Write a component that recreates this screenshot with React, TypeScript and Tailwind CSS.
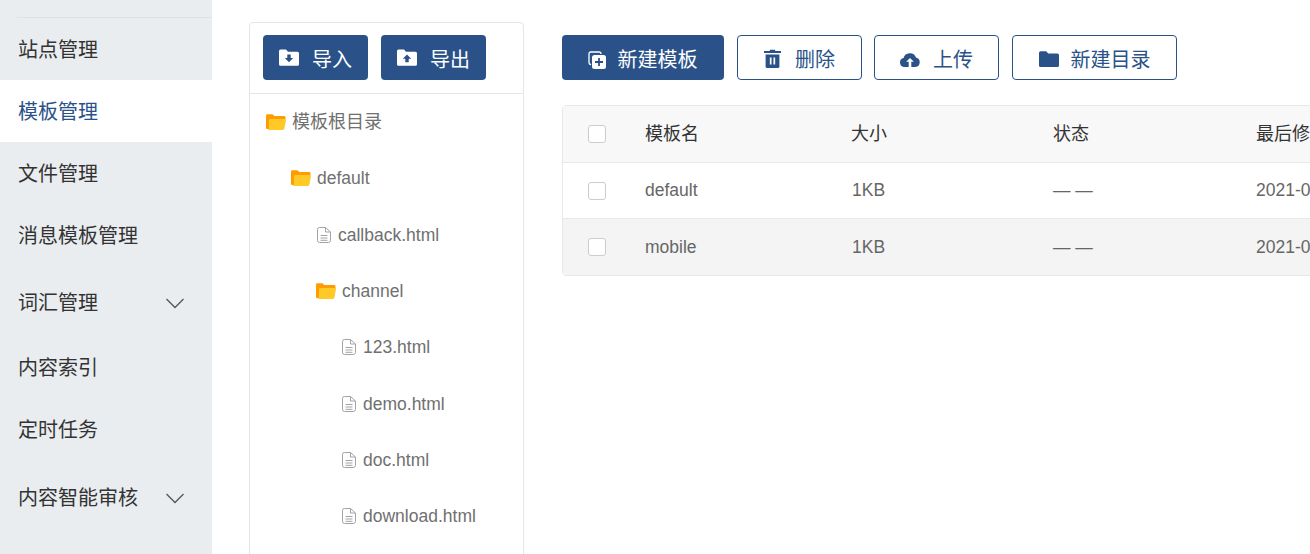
import React from "react";

const FONT = "font-['Liberation_Sans','Noto_Sans_CJK_SC',sans-serif]";

function FolderArrow({ up }: { up?: boolean }) {
  return (
    <svg width="20" height="17" viewBox="0 0 20 17" className="shrink-0">
      <path d="M0 2a1.5 1.5 0 0 1 1.5-1.5h5.5l2 2.2h9.5A1.5 1.5 0 0 1 20 4.2v11a1.5 1.5 0 0 1-1.5 1.5h-17A1.5 1.5 0 0 1 0 15.2z" fill="#fff" />
      {up ? (
        <path d="M10 5.500l4.200 4.300h-2.500v3.500h-3.400v-3.500h-2.500z" fill="#2a5288" />
      ) : (
        <path d="M8.300 5.500h3.400v3.500h2.500l-4.200 4.300-4.200-4.300h2.500z" fill="#2a5288" />
      )}
    </svg>
  );
}

function CopyPlus() {
  return (
    <svg width="18" height="18" viewBox="0 0 18 18" className="shrink-0 mt-[5px] -ml-px mr-px">
      <path d="M3 13.500h-.3A1.700 1.700 0 0 1 1 11.800V2.700A1.700 1.700 0 0 1 2.700 1h8.600A1.700 1.700 0 0 1 13 2.700V3" fill="none" stroke="#fff" strokeWidth="1.300" />
      <rect x="4" y="4" width="14" height="14" rx="2.500" fill="#fff" />
      <path d="M11 7v8M7 11h8" stroke="#2a5288" strokeWidth="1.800" />
    </svg>
  );
}

function Trash() {
  return (
    <svg width="17" height="19" viewBox="0 0 16 19" preserveAspectRatio="none" className="shrink-0 mt-[2px]">
      <path d="M5.500 2V.8h5V2H16v2H0V2z" fill="#2a5288" />
      <path d="M1.500 5.500h13V17.500A1.500 1.500 0 0 1 13 19H3a1.500 1.500 0 0 1-1.500-1.500z" fill="#2a5288" />
      <path d="M5.500 8.500h1.600v7H5.500zM8.900 8.500h1.600v7H8.900z" fill="#fff" />
    </svg>
  );
}

function Cloud() {
  return (
    <svg width="20" height="15" viewBox="0 0 20 15" className="shrink-0 mt-[4px]">
      <path d="M4.500 15A4.500 4.500 0 0 1 3.600 6.100 6.500 6.500 0 0 1 16 5.400 4.900 4.900 0 0 1 15.500 15z" fill="#2a5288" />
      <path d="M10 6l3.800 3.800h-2.500V15H8.700V9.800H6.200z" fill="#fff" />
    </svg>
  );
}

function SolidFolder() {
  return (
    <svg width="20" height="16" viewBox="0 0 20 16" className="shrink-0 mt-[3px]">
      <path d="M0 1.800A1.600 1.600 0 0 1 1.600.2h5.600l2 2.200h9.200A1.600 1.600 0 0 1 20 4v10.400a1.600 1.600 0 0 1-1.600 1.600H1.600A1.600 1.600 0 0 1 0 14.400z" fill="#2a5288" />
    </svg>
  );
}

function OpenFolder() {
  return (
    <svg width="20" height="16" viewBox="0 0 20 16" className="shrink-0">
      <path d="M0 1.500A1.300 1.300 0 0 1 1.300.2h4.600c.6 0 1 .2 1.300.6l1 1.200h9.500A1.300 1.300 0 0 1 19.500 3.300V6H0z" fill="#ff9c00" />
      <path d="M0 3h3v12H1.300A1.300 1.300 0 0 1 0 13.700z" fill="#ff9c00" />
      <path d="M3 6.300c.2-.9.8-1.300 1.600-1.300h14c.9 0 1.500.7 1.300 1.600l-1.500 7.900c-.2.900-.8 1.400-1.600 1.400H1.500c.9 0 1.300-.6 1.400-1.300z" fill="#ffc928" />
    </svg>
  );
}

function FileIcon() {
  return (
    <svg width="14" height="16" viewBox="0 0 14 16" className="shrink-0">
      <path d="M2.500.5h6L13.500 5v8.300a2.200 2.200 0 0 1-2.200 2.200H2.700a2.200 2.200 0 0 1-2.200-2.200V2.500a2 2 0 0 1 2-2z" fill="none" stroke="#a3a3a3" />
      <path d="M8.500.5V5h5M3.500 8.500h7M3.500 11h7M3.500 13.300h7" fill="none" stroke="#a3a3a3" />
    </svg>
  );
}

function Chevron() {
  return (
    <svg width="20" height="12" viewBox="0 0 20 12" className="shrink-0">
      <path d="M1.500 2l8.500 8.500L18.500 2" fill="none" stroke="#555" strokeWidth="1.300" />
    </svg>
  );
}

const nav = [
  { label: "站点管理", cls: "h-[62px]" },
  { label: "模板管理", cls: "h-[62px] bg-white text-[#2a5288]" },
  { label: "文件管理", cls: "h-[62px]" },
  { label: "消息模板管理", cls: "h-[62px]" },
  { label: "词汇管理", cls: "h-[72px]", arrow: true },
  { label: "内容索引", cls: "h-[58px]" },
  { label: "定时任务", cls: "h-[66px]" },
  { label: "内容智能审核", cls: "h-[70px]", arrow: true },
];

const tree: { label: string; pl: string; folder?: boolean; cjk?: boolean }[] = [
  { label: "模板根目录", pl: "pl-4", folder: true, cjk: true },
  { label: "default", pl: "pl-[41px]", folder: true },
  { label: "callback.html", pl: "pl-[67px]" },
  { label: "channel", pl: "pl-[66px]", folder: true },
  { label: "123.html", pl: "pl-[92px]" },
  { label: "demo.html", pl: "pl-[92px]" },
  { label: "doc.html", pl: "pl-[92px]" },
  { label: "download.html", pl: "pl-[92px]" },
];

const solidBtn = "h-[45px] rounded bg-[#2a5288] text-white text-[20px] flex items-center justify-center";
const outlineBtn = "h-[45px] rounded border border-[#2a5288] bg-white text-[#2a5288] text-[20px] flex items-center justify-center";

function Label({ children }: { children: React.ReactNode }) {
  return <span className="pt-[4px]">{children}</span>;
}

function Check() {
  return <span className="block w-[18px] h-[18px] rounded-[3px] border border-[#ccc] bg-white" />;
}

function Row({ cells, cls, head }: { cells: string[]; cls: string; head?: boolean }) {
  return (
    <div className={`flex items-center w-[900px] ${cls}`}>
      <div className="w-[82px] pl-[25px] shrink-0"><Check /></div>
      <div className="w-[206px] shrink-0">{cells[0]}</div>
      <div className={`w-[203px] shrink-0 ${head ? "" : "pl-px"}`}>{cells[1]}</div>
      <div className="w-[202px] shrink-0 -ml-px">{cells[2]}</div>
      <div className="shrink-0 ml-px">{cells[3]}</div>
    </div>
  );
}

export default function App() {
  return (
    <div className={`${FONT} flex w-[1310px] h-[554px] overflow-hidden bg-white`}>
      <aside className="w-[212px] shrink-0 bg-[#e9edf0] text-[20px] text-[#333] pt-[17px]">
        <div className="ml-[17px] border-t border-[#dfe2e5]" />
        {nav.map((n) => (
          <div key={n.label} className={`flex items-center justify-between pl-[18px] pr-[27px] pt-[2px] ${n.cls}`}>
            <span>{n.label}</span>
            {n.arrow && <Chevron />}
          </div>
        ))}
      </aside>

      <section className="ml-[37px] mt-[22px] w-[275px] h-[600px] shrink-0 rounded border border-[#e6e6e6]">
        <div className="flex gap-[13px] px-[13px] pt-3 pb-[13px] border-b border-[#e6e6e6]">
          <div className={`${solidBtn} w-[105px] gap-[13px]`}><FolderArrow /><Label>导入</Label></div>
          <div className={`${solidBtn} w-[105px] gap-[13px]`}><FolderArrow up /><Label>导出</Label></div>
        </div>
        <div className="text-[17.5px] text-[#707070]">
          {tree.map((t) => (
            <div key={t.label} className={`flex items-center h-[56.3px] ${t.pl} ${t.folder ? "gap-[6px]" : "gap-[7px]"}`}>
              {t.folder ? <OpenFolder /> : <FileIcon />}
              <span className={t.cjk ? "text-[18px]" : ""}>{t.label}</span>
            </div>
          ))}
        </div>
      </section>

      <main className="ml-[38px] mt-[35px] flex-1 min-w-0">
        <div className="flex">
          <div className={`${solidBtn} w-[162px] gap-[11px]`}><CopyPlus /><Label>新建模板</Label></div>
          <div className={`${outlineBtn} w-[125px] ml-[13px] gap-[14px]`}><Trash /><Label>删除</Label></div>
          <div className={`${outlineBtn} w-[125px] ml-[12px] gap-[13px]`}><Cloud /><Label>上传</Label></div>
          <div className={`${outlineBtn} w-[165px] ml-[13px] gap-[12px]`}><SolidFolder /><Label>新建目录</Label></div>
        </div>
        <div className="mt-[25px] w-[900px] rounded-l border border-[#e8e8e8] text-[17.5px] text-[#666]">
          <Row head cells={["模板名", "大小", "状态", "最后修改时间"]} cls="h-[57px] bg-[#f8f8f8] text-[18px] text-[#333] border-b border-[#e8e8e8]" />
          <Row cells={["default", "1KB", "— —", "2021-03-15"]} cls="h-[56px] bg-white border-b border-[#e8e8e8]" />
          <Row cells={["mobile", "1KB", "— —", "2021-03-15"]} cls="h-[56px] bg-[#f4f4f4]" />
        </div>
      </main>
    </div>
  );
}
